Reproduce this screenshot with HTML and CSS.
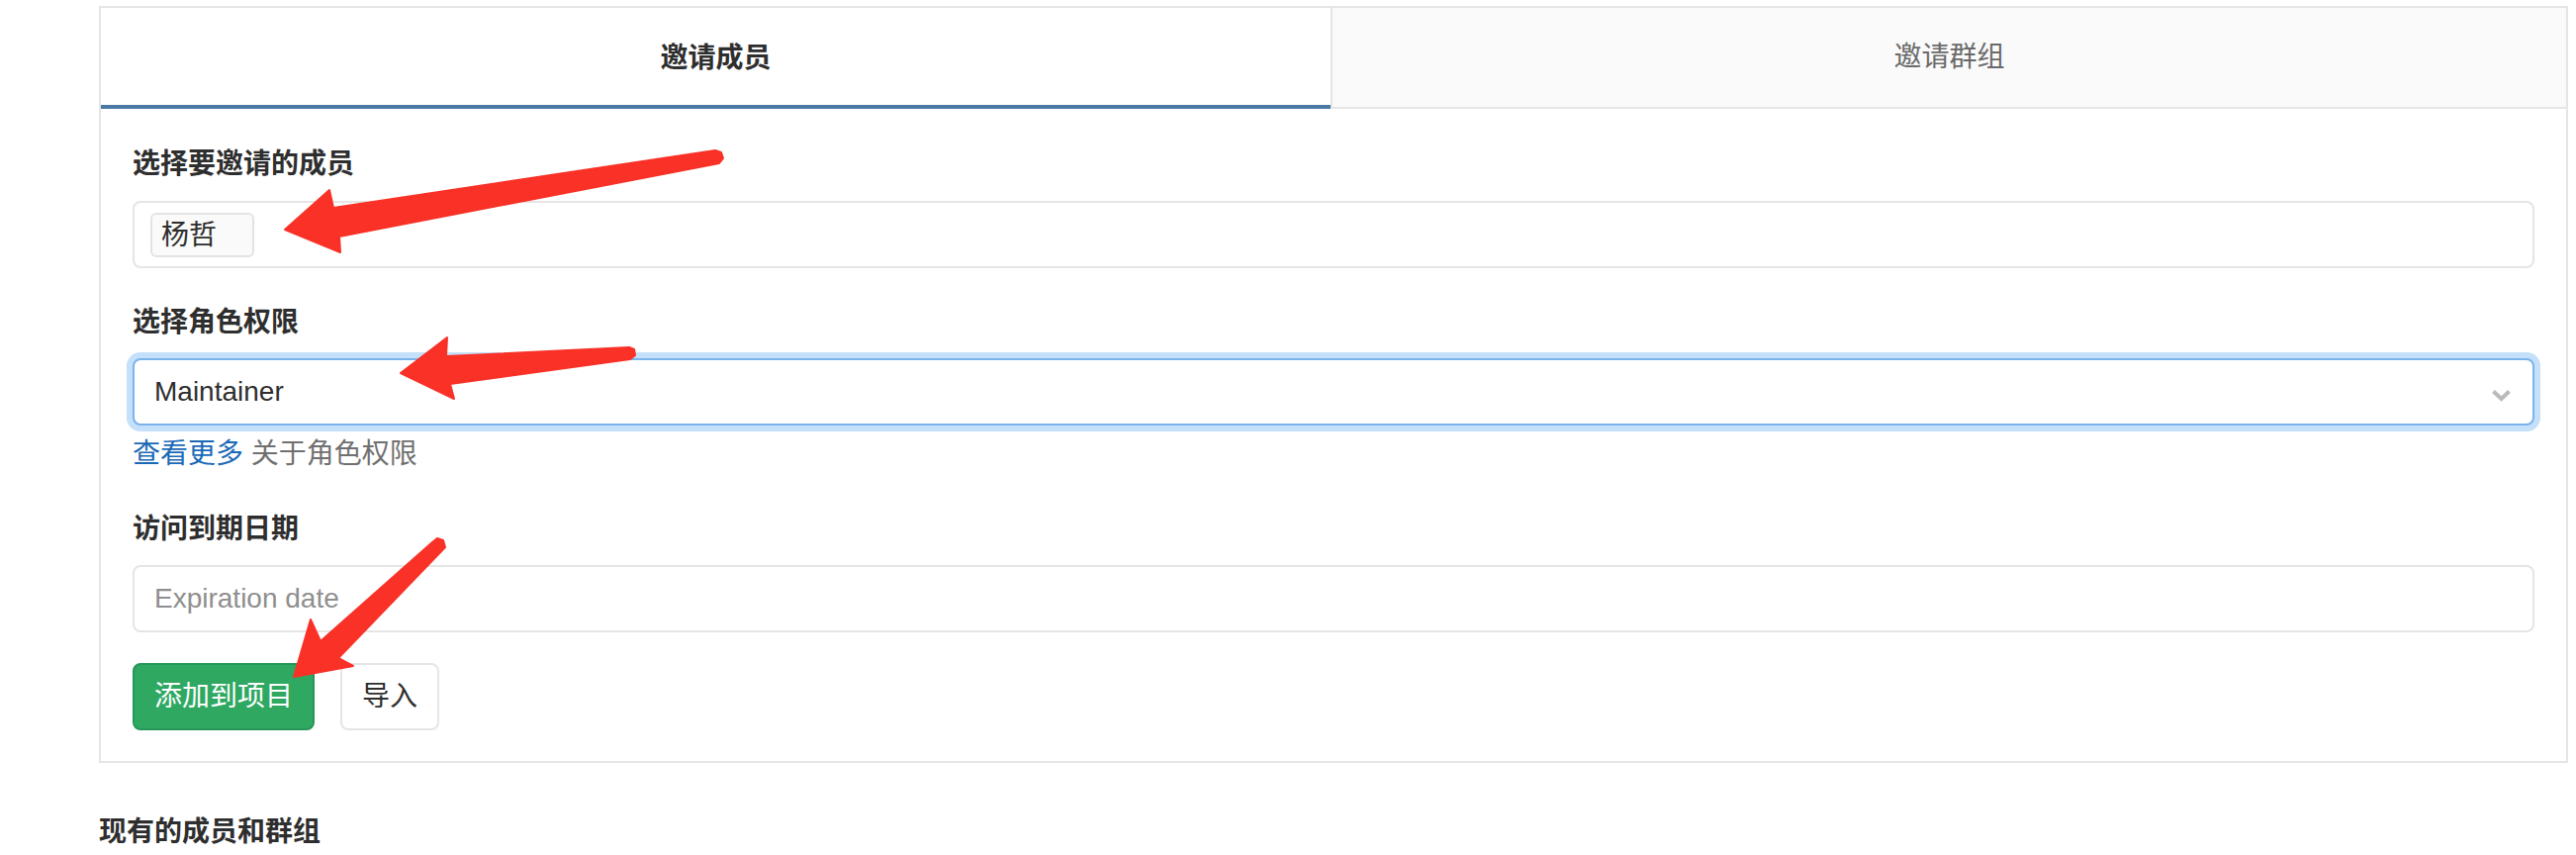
FILE: index.html
```html
<!DOCTYPE html>
<html lang="zh-CN">
<head>
<meta charset="utf-8">
<title>邀请成员</title>
<link rel="stylesheet" href="styles.css">
</head>
<body>
<div class="page">
  <div class="panel">
    <div class="tabs">
      <div class="tab tab-active">邀请成员</div>
      <div class="tab tab-inactive">邀请群组</div>
    </div>
    <form class="form">
      <div class="group group-first">
        <label class="label label-first">选择要邀请的成员</label>
        <div class="control control-token"><span class="token">杨哲</span></div>
      </div>
      <div class="group group-role">
        <label class="label">选择角色权限</label>
        <div class="control control-select">
          <span class="select-value">Maintainer</span>
          <svg class="chevron" width="21" height="13" viewBox="0 0 21 13"><polyline points="2.5,2.5 10.5,10 18.5,2.5" fill="none" stroke="#bababa" stroke-width="4"/></svg>
        </div>
        <p class="help"><a class="help-link">查看更多</a> 关于角色权限</p>
      </div>
      <div class="group group-date">
        <label class="label">访问到期日期</label>
        <div class="control"><span class="placeholder">Expiration date</span></div>
      </div>
      <div class="actions">
        <button type="button" class="btn btn-success">添加到项目</button>
        <button type="button" class="btn">导入</button>
      </div>
    </form>
  </div>
  <h4 class="heading">现有的成员和群组</h4>

  <svg class="arrows" width="2604" height="864" viewBox="0 0 2604 864">
    <g fill="#f93127" stroke="#f93127" stroke-width="2" stroke-linejoin="round">
      <polygon points="288,232 333,192 337,210 723,152 729,154 731,160 727,165 343,239 344,255"/>
      <polygon points="405,377 452,341 451,360 636,351 641,353 642,359 637,363 455,388 459,403"/>
      <polygon points="297,684 314,626 324,648 437,548 442,544 448,546 450,553 342,665 357,673"/>
    </g>
  </svg>
</div>
</body>
</html>
```

FILE: styles.css
```css
html, body {
  margin: 0;
  padding: 0;
  background: #ffffff;
}

body {
  font-family: "Liberation Sans", "Noto Sans CJK SC", sans-serif;
  font-size: 28px;
  line-height: 40px;
  color: #2e2e2e;
}

.page {
  position: relative;
  box-sizing: border-box;
  width: 2604px;
  height: 864px;
  padding: 6px 8px 0 100px;
  overflow: hidden;
}

.panel {
  border: 2px solid #e5e5e5;
}

.tabs {
  display: flex;
  height: 102px;
}

.tab {
  display: flex;
  align-items: center;
  justify-content: center;
  box-sizing: border-box;
}

.tab-active {
  flex: 0 0 1245px;
  font-weight: 700;
  color: #2e2e2e;
  background: #ffffff;
  border-right: 2px solid #e5e5e5;
  box-shadow: inset 0 -4px 0 #4a79a4;
}

.tab-inactive {
  flex: 1 1 auto;
  color: #6a6a6a;
  background: #fafafa;
  border-bottom: 2px solid #e5e5e5;
}

.form {
  padding: 36px 32px 31px;
}

.group {
  margin-bottom: 36px;
}

.group-first {
  margin-bottom: 35px;
}

.group-role {
  margin-bottom: 36px;
}

.group-date {
  margin-bottom: 31px;
}

.label {
  display: block;
  font-weight: 700;
  margin-bottom: 16px;
}

.label-first {
  margin-bottom: 17px;
}

.control {
  box-sizing: border-box;
  height: 68px;
  display: flex;
  align-items: center;
  padding: 0 20px;
  border: 2px solid #e5e5e5;
  border-radius: 8px;
  background: #ffffff;
}

.control-token {
  padding-left: 16px;
}

.token {
  box-sizing: border-box;
  height: 45px;
  line-height: 41px;
  padding: 0 36px 0 9px;
  border: 2px solid #e3e3e3;
  border-radius: 6px;
  background: #fafafa;
  color: #2e2e2e;
}

.control-select {
  justify-content: space-between;
  border-color: #7ab4ec;
  box-shadow: 0 0 0 6px #c4e0fa;
  padding-right: 21px;
}

.select-value {
  color: #2e2e2e;
}

.chevron {
  display: block;
  margin-top: 7px;
}

.help {
  margin: 9px 0 0;
  color: #707070;
}

.help-link {
  color: #1b69b6;
  text-decoration: none;
}

.placeholder {
  color: #8f8f8f;
}

.actions {
  display: flex;
  gap: 26px;
}

.btn {
  box-sizing: border-box;
  height: 68px;
  padding: 0 20px;
  border: 2px solid #e5e5e5;
  border-radius: 8px;
  background: #ffffff;
  color: #2e2e2e;
  font: inherit;
  line-height: 40px;
}

.btn-success {
  background: #2fa862;
  border-color: #26975a;
  color: #ffffff;
}

.heading {
  margin: 50px 0 0;
  font-size: 28px;
  line-height: 40px;
  font-weight: 700;
  color: #2e2e2e;
}

.arrows {
  position: absolute;
  left: 0;
  top: 0;
  pointer-events: none;
}
```
